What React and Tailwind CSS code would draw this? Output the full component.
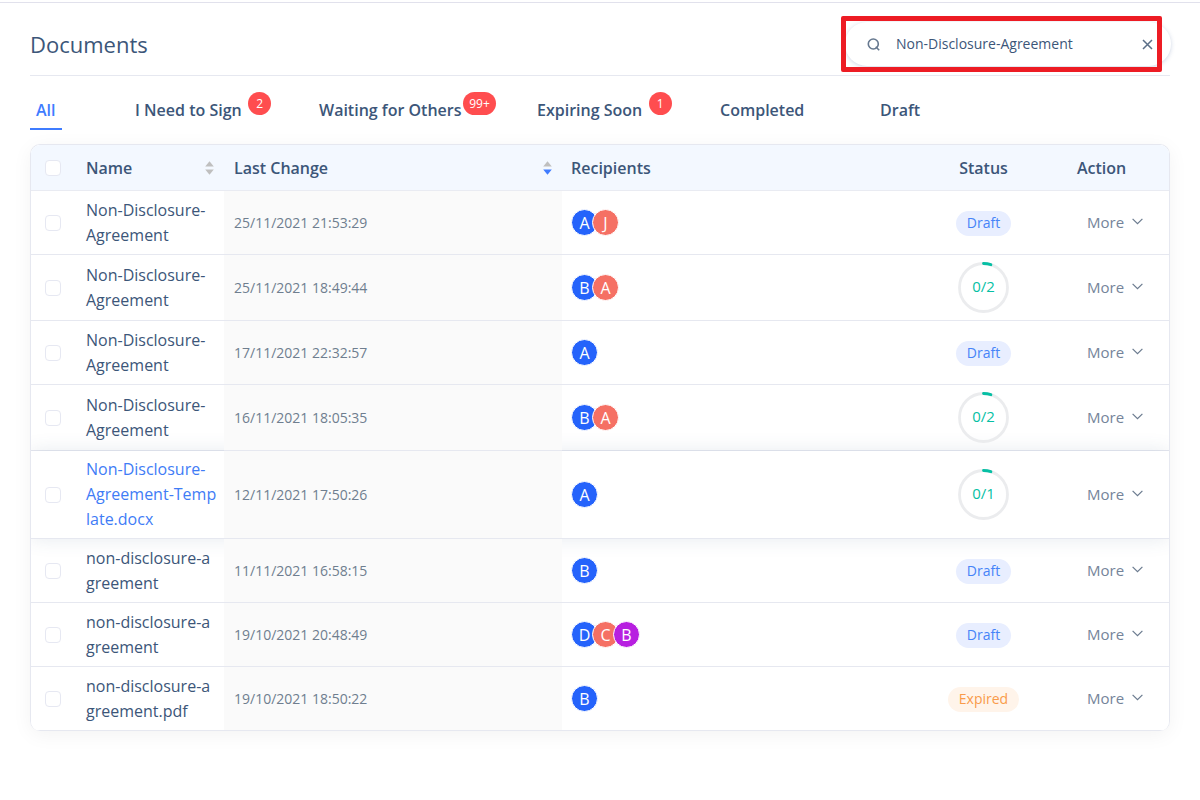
import { useState } from 'react';

const tabs = [
  { label: 'All' },
  { label: 'I Need to Sign', badge: '2' },
  { label: 'Waiting for Others', badge: '99+' },
  { label: 'Expiring Soon', badge: '1' },
  { label: 'Completed' },
  { label: 'Draft' }
];

const documents = [
  { name: 'Non-Disclosure-\nAgreement', date: '25/11/2021 21:53:29', recipients: ['A', 'J'], status: 'Draft' },
  { name: 'Non-Disclosure-\nAgreement', date: '25/11/2021 18:49:44', recipients: ['B', 'A'], status: '0/2' },
  { name: 'Non-Disclosure-\nAgreement', date: '17/11/2021 22:32:57', recipients: ['A'], status: 'Draft' },
  { name: 'Non-Disclosure-\nAgreement', date: '16/11/2021 18:05:35', recipients: ['B', 'A'], status: '0/2' },
  { name: 'Non-Disclosure-\nAgreement-Temp\nlate.docx', date: '12/11/2021 17:50:26', recipients: ['A'], status: '0/1', active: true },
  { name: 'non-disclosure-a\ngreement', date: '11/11/2021 16:58:15', recipients: ['B'], status: 'Draft' },
  { name: 'non-disclosure-a\ngreement', date: '19/10/2021 20:48:49', recipients: ['D', 'C', 'B'], status: 'Draft' },
  { name: 'non-disclosure-a\ngreement.pdf', date: '19/10/2021 18:50:22', recipients: ['B'], status: 'Expired' }
];

const avatarColors = ['bg-[#2563fb]', 'bg-[#f57064]', 'bg-[#b71fe0]'];

const Checkbox = ({ label }) => (
  <input
    type="checkbox"
    aria-label={label}
    className="block size-4 appearance-none rounded border border-[#e6e8f2] bg-white checked:border-[#3f7cff] checked:bg-[#3f7cff]"
  />
);

const SortArrows = ({ active }) => (
  <svg className="h-[14px] w-[9px] shrink-0" viewBox="0 0 9 14" aria-hidden="true">
    <path d="M4.5 0.3L8.8 5.5H0.2z" fill="#bfbfbf" />
    <path d="M4.5 13.7L8.8 8.5H0.2z" fill={active ? '#3f7cff' : '#bfbfbf'} />
  </svg>
);

const Status = ({ status }) => {
  if (status.includes('/')) {
    return (
      <div className="relative mx-auto flex size-[51px] items-center justify-center">
        <svg className="absolute inset-0" viewBox="0 0 51 51" fill="none" aria-hidden="true">
          <circle cx="25.5" cy="25.5" r="24" stroke="#ebecee" strokeWidth="2.8" />
          <path d="M25.5 1.5A24 24 0 0 1 32.9 2.7" stroke="#06bfa4" strokeWidth="2.8" strokeLinecap="round" />
        </svg>
        <span className="pb-[3px] text-[15px] leading-5 text-[#06bfa4]">{status}</span>
      </div>
    );
  }

  return (
    <span
      className={`inline-block rounded-full px-[11px] pb-px text-sm leading-6 ${
        status === 'Expired' ? 'bg-[#fff4ea] text-[#f99b4a]' : 'bg-[#e8eeff] text-[#4684f8]'
      }`}
    >
      {status}
    </span>
  );
};

const DocumentRow = ({ doc }) => (
  <tr
    className={`${doc.status.includes('/') ? 'h-[66px]' : 'h-16'} ${
      doc.active ? 'shadow-[0_0_18px_rgba(60,90,130,0.13)]' : ''
    }`}
  >
    <td className={`border-b border-[#e6e8f0] pl-[14px] ${doc.active ? 'bg-white' : ''}`}>
      <Checkbox label={`Select ${doc.name}`} />
    </td>
    <td className={`border-b border-[#e6e8f0] px-[10px] py-[6px] ${doc.active ? 'bg-white' : ''}`}>
      <a
        href="#"
        className={`block text-base leading-[25px] whitespace-pre ${doc.active ? 'text-[#3f7cf6]' : 'text-[#3c5679]'}`}
      >
        {doc.name}
      </a>
    </td>
    <td className="relative border-b border-[#e6e8f0] bg-[#fafafa] px-[10px] text-sm text-[#6f7e8f]">{doc.date}</td>
    <td className={`border-b border-[#e6e8f0] px-[9px] ${doc.active ? 'bg-white' : ''}`}>
      <div className="flex -space-x-[6px]">
        {doc.recipients.map((letter, i) => (
          <span
            key={i}
            className={`flex size-[27px] items-center justify-center rounded-full border border-white text-base leading-none text-white ${avatarColors[i]}`}
          >
            {letter}
          </span>
        ))}
      </div>
    </td>
    <td className={`border-b border-[#e6e8f0] text-center ${doc.active ? 'bg-white' : ''}`}>
      <Status status={doc.status} />
    </td>
    <td className={`border-b border-[#e6e8f0] pl-5 ${doc.active ? 'bg-white' : ''}`}>
      <button type="button" className="flex items-center gap-2 pb-[2px] text-[15px] leading-6 text-[#75849a]">
        More
        <svg className="h-[7px] w-[11px]" viewBox="0 0 11 7" fill="none" stroke="#6b7b8f" strokeWidth="1.2" aria-hidden="true">
          <path d="M0.6 0.8L5.5 5.7L10.4 0.8" />
        </svg>
      </button>
    </td>
  </tr>
);

const App = () => {
  const [search, setSearch] = useState('Non-Disclosure-Agreement');
  const [activeTab, setActiveTab] = useState('All');

  return (
    <div className="min-h-screen bg-white pt-[2px] font-['Open_Sans',sans-serif] text-[#3c5679]">
      <div className="border-t border-[#e1e1ec]" />
      <main className="px-[30px]">
        <header className="flex h-[73px] items-center justify-between border-b border-[#e6e8f0] pt-[10px]">
          <h1 className="text-[22px] leading-8">Documents</h1>

          <div className="relative -mr-px flex h-11 w-[326px] items-center rounded-full bg-white pr-[18px] pl-[22px] shadow-[0_1px_4px_rgba(60,90,150,0.25)]">
            <svg className="mr-4 size-[13px] shrink-0" viewBox="0 0 13 13" fill="none" stroke="#66788f" strokeWidth="1.6" aria-hidden="true">
              <circle cx="6.3" cy="6" r="5" />
              <path d="M8.8 8.8L12.2 12.2" />
            </svg>
            <input
              type="text"
              aria-label="Search documents"
              value={search}
              onChange={(e) => setSearch(e.target.value)}
              className="min-w-0 flex-1 bg-transparent text-sm outline-none"
            />
            <button type="button" aria-label="Clear search" onClick={() => setSearch('')}>
              <svg className="size-[11px]" viewBox="0 0 11 11" fill="none" stroke="#5b6f88" strokeWidth="1.5" aria-hidden="true">
                <path d="M1 1L10 10M10 1L1 10" />
              </svg>
            </button>
            {/* highlight frame */}
            <div className="pointer-events-none absolute -top-[6px] right-[9px] -bottom-[6px] -left-1 rounded-xs border-[5px] border-[#ed1c24]" />
          </div>
        </header>

        <nav className="grid grid-cols-[99px_184px_218px_183px_160px_auto] pt-[15px] pb-[14px]">
          {tabs.map((tab) => (
            <div key={tab.label}>
              <button
                type="button"
                onClick={() => setActiveTab(tab.label)}
                className={`relative h-[39px] border-b-2 px-[6px] text-base font-semibold whitespace-nowrap ${
                  activeTab === tab.label ? 'border-[#3f7cff] text-[#3f7cff]' : 'border-transparent'
                }`}
              >
                {tab.label}
                {tab.badge && (
                  <span className="absolute top-[1px] left-full -ml-2 flex w-10 justify-center">
                    <span className="min-w-[23px] rounded-full bg-[#ff4d4f] px-[6px] text-xs leading-[23px] font-normal text-white">
                      {tab.badge}
                    </span>
                  </span>
                )}
              </button>
            </div>
          ))}
        </nav>

        <div className="overflow-hidden rounded-[10px] border border-b-0 border-[#e6e8f0] shadow-[0_4px_20px_rgba(0,0,0,0.05)]">
          <table className="w-full table-fixed border-separate border-spacing-0 bg-white text-left">
            <colgroup>
              <col className="w-[45px]" />
              <col className="w-[148px]" />
              <col />
              <col />
              <col className="w-[167px]" />
              <col className="w-[102px]" />
            </colgroup>
            <thead>
              <tr className="h-[46px] text-base">
                <th className="border-b border-[#e9ebf2] bg-[#f3f8ff] pl-[14px]">
                  <Checkbox label="Select all documents" />
                </th>
                <th className="border-b border-[#e9ebf2] bg-[#f3f8ff] px-[10px] font-semibold">
                  <div className="flex items-center justify-between">
                    Name
                    <SortArrows />
                  </div>
                </th>
                <th className="border-b border-[#e9ebf2] bg-[#f3f8ff] px-[10px] font-semibold">
                  <div className="flex items-center justify-between">
                    Last Change
                    <SortArrows active />
                  </div>
                </th>
                <th className="border-b border-[#e9ebf2] bg-[#f3f8ff] px-[9px] font-semibold">Recipients</th>
                <th className="border-b border-[#e9ebf2] bg-[#f3f8ff] text-center font-semibold">Status</th>
                <th className="border-b border-[#e9ebf2] bg-[#f3f8ff] px-[10px] font-semibold">Action</th>
              </tr>
            </thead>
            <tbody>
              {documents.map((doc, i) => (
                <DocumentRow key={i} doc={doc} />
              ))}
            </tbody>
          </table>
        </div>
      </main>
    </div>
  );
};

export default App;
